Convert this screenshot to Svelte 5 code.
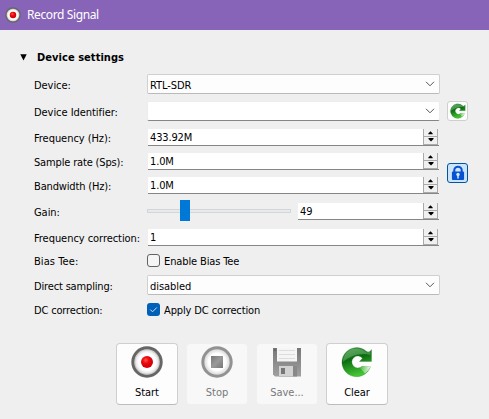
<script>
  let gain = $state(49);
</script>

{#snippet record()}
  <circle cx="16" cy="16" r="14.2" fill="url(#disc)" stroke="#666" stroke-width="3" />
  <circle cx="16" cy="16" r="12.2" fill="none" stroke="#aaa" stroke-opacity=".4" />
{/snippet}

{#snippet refresh()}
  <path d="M30.500 3.500V15.500H18.500L21.500 12.200A6 6 0 1 0 21 20.300L29.500 20.500A14.600 14.600 0 1 1 25.500 5.500C27.500 6.500 29.500 5.500 30.500 3.500Z" fill="url(#green)" stroke="#176b1b" stroke-opacity=".5" stroke-width=".5" />
  <path d="M21 20.300 29.800 20.300Q27.500 25 24 27.500L18.500 21.500Z" fill="url(#fade)" />
  <path d="M2 16C2 8 8 2.500 15.500 2.500c4 0 7 1.500 10 4l4-1.500v4C19 6 9 10 2 16Z" fill="#b9e0b9" opacity=".3" />
{/snippet}

{#snippet combo(value, plain)}
  <div class="combo" class:plain>
    <span>{value}</span>
    <svg width="10" height="6" viewBox="0 0 10 6"><path d="M1 .8 5 4.8 9 .8" fill="none" stroke="#555" stroke-width="1" /></svg>
  </div>
{/snippet}

{#snippet spin(value)}
  <div class="spin">
    <span>{value}</span>
    <i class="arrows">
      <svg width="12" height="8" viewBox="0 0 12 8"><path d="M3.500 6v-1L6 2.500 8.500 5v1Z" /></svg>
      <svg width="12" height="7" viewBox="0 0 12 7"><path d="M3.500 1v1L6 4.500 8.500 2v-1Z" /></svg>
    </i>
  </div>
{/snippet}

<svg class="defs" width="0" height="0">
  <defs>
    <radialGradient id="disc"><stop offset=".6" stop-color="#fff" /><stop offset="1" stop-color="#ccc" /></radialGradient>
    <radialGradient id="red" cx=".4" cy=".35"><stop stop-color="#ff5b50" /><stop offset=".5" stop-color="#ee0c10" /><stop offset="1" stop-color="#d5000a" /></radialGradient>
    <linearGradient id="green" x2=".3" y2="1"><stop stop-color="#3f9b43" /><stop offset=".45" stop-color="#0b6c10" /><stop offset="1" stop-color="#43c432" /></linearGradient>
    <linearGradient id="fade" x2="1"><stop stop-color="#fff" stop-opacity=".1" /><stop offset="1" stop-color="#fff" stop-opacity=".95" /></linearGradient>
    <linearGradient id="metal" x2="1" y2="1"><stop stop-color="#777" /><stop offset=".5" stop-color="#999" /><stop offset="1" stop-color="#777" /></linearGradient>
    <linearGradient id="disk" x2="0" y2="1"><stop stop-color="#777" /><stop offset="1" stop-color="#a0a0a0" /></linearGradient>
  </defs>
</svg>

<div class="window">
  <header>
    <svg width="16" height="16" viewBox="0 0 32 32">{@render record()}<circle cx="16" cy="16" r="6.5" fill="url(#red)" /></svg>
    <span>Record Signal</span>
  </header>

  <div class="heading">
    <svg width="7" height="7" viewBox="0 0 7 7"><path d="M.3.2h6.4L3.5 6.6Z" /></svg>
    <b>Device settings</b>
  </div>

  <div class="body">
    <div class="form">
      <div class="row tall"><span class="label">Device:</span>{@render combo('RTL-SDR', false)}</div>
      <div class="row tall"><span class="label">Device Identifier:</span>{@render combo('', true)}</div>
      <div class="row freq"><span class="label">Frequency (Hz):</span>{@render spin('433.92M')}</div>
      <div class="row"><span class="label tight">Sample rate (Sps):</span>{@render spin('1.0M')}</div>
      <div class="row"><span class="label tight">Bandwidth (Hz):</span>{@render spin('1.0M')}</div>
      <div class="row gain">
        <span class="label">Gain:</span>
        <div class="slider"><i class="track"></i><i class="thumb"></i></div>
        {@render spin(gain)}
      </div>
      <div class="row corr"><span class="label">Frequency correction:</span>{@render spin('1')}</div>
      <div class="row check"><span class="label wide">Bias Tee:</span><i class="box"></i><span class="caption">Enable Bias Tee</span></div>
      <div class="row tall direct"><span class="label tight">Direct sampling:</span>{@render combo('disabled', false)}</div>
      <div class="row check"><span class="label tight">DC correction:</span>
        <i class="box on"><svg width="13" height="13" viewBox="0 0 13 13"><path d="M3.3 6.6 5.5 8.8 9.8 4.5" fill="none" stroke="#cfe2f5" /></svg></i>
        <span class="caption">Apply DC correction</span></div>
    </div>
    <div class="side">
      <div class="tool"><svg width="16" height="16" viewBox="0 0 32 32">{@render refresh()}</svg></div>
      <div class="tool lock">
        <svg width="14" height="16" viewBox="0 0 15 16">
          <path d="M3.5 8V5.3a4 4 0 0 1 8 0V8" fill="none" stroke="#0752d2" stroke-width="2.2" />
          <rect x="1" y="6.5" width="13" height="9" rx="1" fill="#0752d2" />
          <circle cx="7.5" cy="9.5" r="1.8" fill="#d7ebff" /><path d="M6.7 10h1.6v4H6.7Z" fill="#d7ebff" />
        </svg>
      </div>
    </div>
  </div>

  <div class="actions">
    <div class="btn">
      <svg width="32" height="32" viewBox="0 0 32 32">{@render record()}<circle cx="16" cy="16" r="6" fill="url(#red)" /></svg>
      <span>Start</span>
    </div>
    <div class="btn off">
      <svg width="32" height="32" viewBox="0 0 32 32"><circle cx="16" cy="16" r="14.2" fill="url(#disc)" stroke="#929292" stroke-width="3" /><path d="M10 10h12v12H10Z" fill="url(#metal)" /></svg>
      <span>Stop</span>
    </div>
    <div class="btn off">
      <svg width="32" height="32" viewBox="0 0 32 32">
        <path d="M2 2h28v28.500H4L2 28.500Z" fill="url(#disk)" />
        <path d="M6 2h20v13.500H6Z" fill="#f5f5f5" /><path d="M8 4.5h16M8 8.5h16M8 12.500h16" stroke="#ddd" />
        <path d="M8 20h18v10.500H8Z" fill="#888" /><path d="M8 20h14v10.500H8Z" fill="#d2d2d2" /><path d="M10 22h4v6h-4Z" fill="#777" />
        <path d="M3 3h2v2H3Z" fill="#666" />
      </svg>
      <span>Save...</span>
    </div>
    <div class="btn"><svg width="32" height="32" viewBox="0 0 32 32">{@render refresh()}</svg><span>Clear</span></div>
  </div>
</div>

<style>
  * { box-sizing: border-box; }
  .window { width: 489px; height: 419px; overflow: hidden; background: #efefef; color: #000; font: 11px/16px "DejaVu Sans Condensed", "DejaVu Sans", sans-serif; font-stretch: condensed; letter-spacing: -.05px; }
  .defs { position: absolute; }
  svg { display: block; flex: none; }
  header { height: 30px; background: #8764b8; color: #fff; display: flex; align-items: center; gap: 6px; padding: 0 0 1px 5px; font: 12px/16px "Noto Sans", sans-serif; letter-spacing: -.38px; }
  header span { padding-top: 1px; }
  .heading { height: 44px; display: flex; align-items: center; gap: 10px; padding: 10px 0 0 20px; }
  .heading b { letter-spacing: .05px; padding-top: 2px; }
  .body { display: flex; gap: 7px; padding-left: 34px; height: 269px; }
  .form { width: 406px; }
  .row { height: 17px; margin-top: 7px; display: flex; align-items: center; white-space: nowrap; }
  .row.tall { height: 20px; }
  .row.tall:first-child { margin-top: 0; }
  .row.freq, .row.direct { margin-top: 8px; }
  .row.gain, .row.corr { margin-top: 9px; }
  .row.check { height: 13px; margin-top: 8px; }
  .label { width: 114px; flex: none; padding-top: 2px; }
  .tall .label, .check .label { padding-top: 3px; }
  .label.tight { letter-spacing: -.16px; }
  .label.wide { letter-spacing: .08px; }
  .caption { padding-top: 3px; letter-spacing: -.12px; }
  .combo { flex: 1; height: 20px; display: flex; justify-content: space-between; align-items: center; padding: 0 4px 0 2px; background: #fdfdfd; border: 1px solid #d0d0d0; border-bottom-color: #bababa; border-radius: 2px; margin-left: -1px; }
  .combo span { padding-top: 3px; }
  .combo.plain { background: #fff; border-color: #ececec; border-bottom-color: #868686; }
  .spin { flex: 1; height: 17px; display: flex; justify-content: space-between; margin-right: 1px; padding-left: 2px; background: #fff; border-bottom: 1px solid #868686; letter-spacing: -.15px; }
  .spin span { padding-top: 1px; }
  .arrows { width: 15px; height: 16px; background: #f0f0f0; border: 1px solid #aaa; border-top: 0; display: block; box-shadow: 1px 0 #efefef; margin-right: 1px; }
  .arrows svg { margin: 0 auto; }
  .arrows svg:first-child { width: 100%; border-bottom: 1px solid #aaa; }
  .slider { width: 151px; height: 21px; flex: none; display: flex; align-items: center; margin-left: -1px; }
  .slider .track { width: 144px; height: 4px; border: 1px solid #d2d6d6; background: #e7eaea; flex: none; margin-bottom: 2px; }
  .slider .thumb { width: 10px; height: 21px; background: #0078d7; flex: none; margin-left: -111px; margin-bottom: 2px; }
  .box { width: 13px; height: 13px; margin-left: -1px; margin-right: 4px; border: 1px solid #626262; border-radius: 3px; background: #f5f5f5; flex: none; }
  .box.on { background: #005fb8; border: 0; }
  .side { padding-top: 27px; }
  .tool { width: 21px; height: 20px; border: 1px solid #cfcfcf; border-radius: 3px; background: #fdfdfd; display: grid; place-items: center; }
  .lock { margin-top: 42px; background: #cce4f7; border-color: #0054a0; }
  .actions { display: flex; gap: 8px; padding-left: 116px; }
  .btn { width: 62px; height: 62px; border: 1px solid #cfcfcf; border-bottom-color: #bcbcbc; border-radius: 4px; background: #fdfdfd; display: flex; flex-direction: column; align-items: center; padding-top: 2px; gap: 7px; }
  .btn.off { background: #f8f8f8; border-color: #f0f0f0; color: #787878; }
</style>
